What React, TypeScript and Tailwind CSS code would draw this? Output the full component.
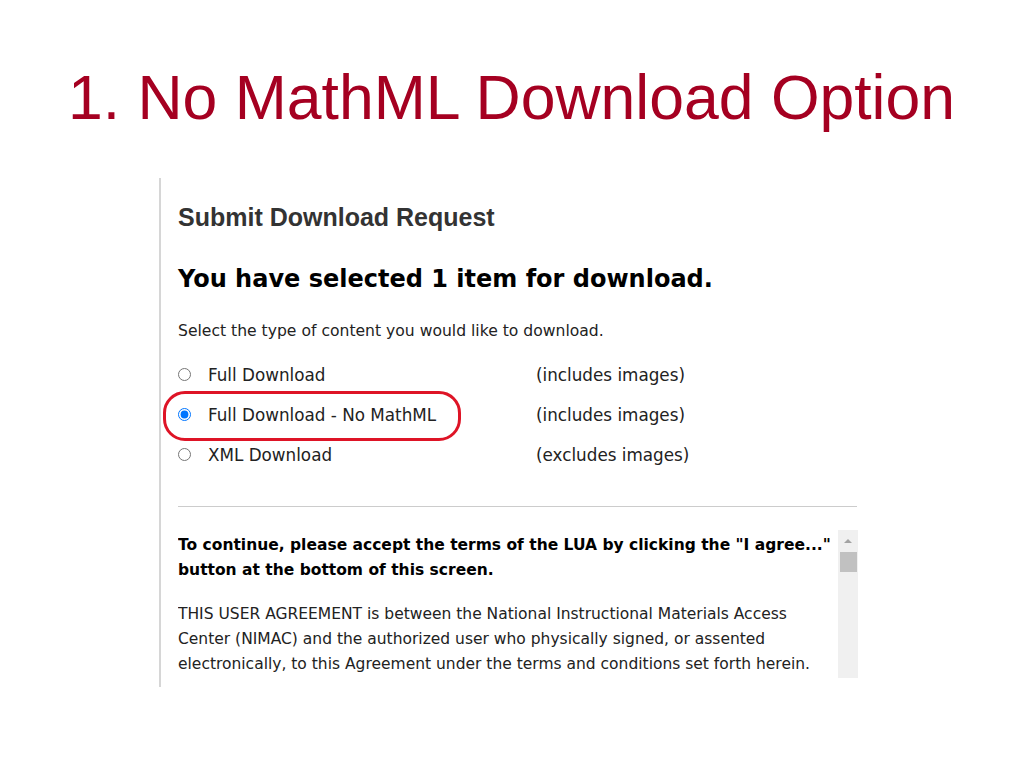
import React from 'react';

const options = [
    { label: 'Full Download', note: '(includes images)', checked: false },
    { label: 'Full Download - No MathML', note: '(includes images)', checked: true },
    { label: 'XML Download', note: '(excludes images)', checked: false },
];

const verdana = { fontFamily: '"DejaVu Sans", Verdana, sans-serif' };

export default function App() {
    return (
        <div className="w-[1024px] h-[768px] bg-white overflow-hidden" style={{ fontFamily: '"Liberation Sans", Arial, sans-serif' }}>
            <h1 className="pt-[65px] pl-[68px] text-[62.5px] leading-[64px] text-[#a50021] font-normal whitespace-nowrap">
                1. No MathML Download Option
            </h1>

            <div className="mt-[49px] ml-[159px] w-[699px] h-[509px] border-l-2 border-[#d6d6d6] pl-[17px]">
                <h2 className="pt-[25px] text-[25px] leading-[28px] font-bold text-[#333333]">Submit Download Request</h2>

                <div style={verdana}>
                    <p className="mt-[34px] text-[24px] leading-[28px] font-bold text-black whitespace-nowrap">
                        You have selected 1 item for download.
                    </p>

                    <p className="mt-[28px] text-[15.6px] leading-[20px] text-[#222222]">
                        Select the type of content you would like to download.
                    </p>

                    <div className="mt-[25px] flex flex-col gap-[20px]">
                        {options.map((opt) => (
                            <div key={opt.label} className="relative flex items-center h-[20px] text-[16.8px] text-[#222222]">
                                <div className="w-[358px] flex items-center">
                                    <input
                                        type="radio"
                                        name="dl"
                                        defaultChecked={opt.checked}
                                        className="m-0 w-[13px] h-[13px] accent-[#0075ff] -translate-y-[2px]"
                                    />
                                    <span className="ml-[17px]">{opt.label}</span>
                                </div>
                                <span>{opt.note}</span>
                                {opt.checked && (
                                    <div className="absolute left-[-15px] top-[-15px] w-[298px] h-[50px] border-[3px] border-[#de1426] rounded-[22px]" />
                                )}
                            </div>
                        ))}
                    </div>

                    <div className="mt-[40px] h-px bg-[#cccccc] w-[679px]" />

                    <div className="mt-[23px] w-[680px] h-[148px] flex overflow-hidden">
                        <div className="flex-1 pt-[3px] text-[15.5px] leading-[25px] text-[#222222]">
                            <p className="font-bold text-black">
                                To continue, please accept the terms of the LUA by clicking the "I agree..." button at the bottom of this screen.
                            </p>
                            <p className="mt-[19px]">
                                THIS USER AGREEMENT is between the National Instructional Materials Access Center (NIMAC) and the authorized user who physically signed, or assented electronically, to this Agreement under the terms and conditions set forth herein.
                            </p>
                        </div>
                        <div className="w-[20px] bg-[#f0f0f0] flex flex-col items-center">
                            <div className="h-[22px] flex items-center justify-center">
                                <div className="w-0 h-0 border-l-[4px] border-r-[4px] border-b-[4px] border-l-transparent border-r-transparent border-b-[#a3a3a3]" />
                            </div>
                            <div className="w-[17px] h-[20px] bg-[#c1c1c1]" />
                        </div>
                    </div>
                </div>
            </div>
        </div>
    );
}
